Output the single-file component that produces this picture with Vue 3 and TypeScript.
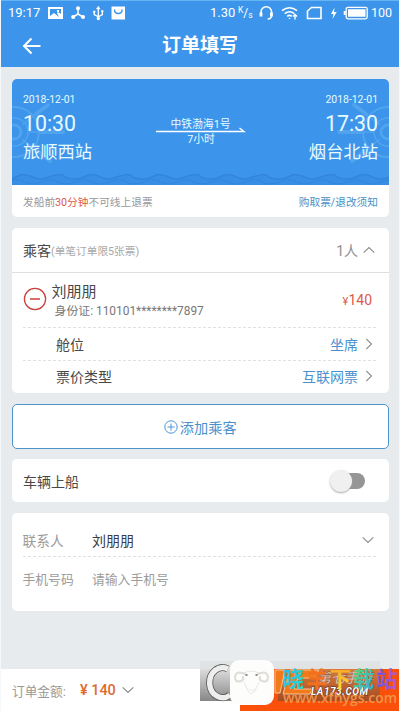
<script setup lang="ts">
interface Option { label: string; value: string }

const options: Option[] = [
  { label: '舱位', value: '坐席' },
  { label: '票价类型', value: '互联网票' },
]
</script>

<template>
  <div class="page">
    <header class="top">
      <div class="status">
        <span class="clock">19:17</span>
        <svg class="status-left" width="80" height="16" viewBox="0 0 80 16">
          <path fill="#fff" fill-rule="evenodd" d="M1 2h15v12H1zM3 4v7l4-3 5 4-2-4 1-1 3 2V4zM10 5h2v2h-2z" />
          <g stroke="#fff" stroke-width="1.5" fill="#fff">
            <path d="M31 4v5l-5 3M31 9l5 3" fill="none" />
            <circle cx="31" cy="3.2" r="1.3" /><circle cx="26.2" cy="12" r="1.3" /><circle cx="36" cy="12" r="1.3" />
          </g>
          <g stroke="#fff" stroke-width="1.3" fill="none">
            <path d="M51.300 3v11M47.200 7v2.500l4.100 2.300 4.100-2.300V6.500" />
            <path d="M49.500 4l1.800-2.800 1.800 2.800zM46.500 6h1.600v1.500h-1.600zM54.500 5.500h1.600V7h-1.600z" fill="#fff" stroke-width=".6" />
            <circle cx="51.300" cy="13.500" r="1" fill="#fff" />
          </g>
          <path fill="#fff" d="M64.500 1.500h13.500v13H64.500z" />
          <path d="M67.500 4.500q0 4 3.800 4t3.800-4" fill="none" stroke="#3c95ea" stroke-width="1.400" />
        </svg>
        <span class="speed">1.30</span>
        <span class="unit"><sup>K</sup>/<sub>s</sub></span>
        <svg class="status-right" width="110" height="16" viewBox="0 0 110 16">
          <g fill="none" stroke="#fff" stroke-width="1.600">
            <path d="M3 9V7a5.300 5.300 0 0 1 10.600 0v3q0 4-4 4" />
            <path d="M3 7.500v4M13.400 7.500v4" stroke-width="2.800" />
            <path d="M24 5.700q7.500-6 15 0M26.700 8.600q4.800-3.800 9.600 0M29.200 11.300q2.300-1.800 4.600 0" />
            <path d="M31.500 13v1M37 9v5.500M35 11.500l2-2 2 2" stroke-width="1.400" />
            <path d="M49.500 13.500V6l4-3.500H63v11z" />
            <rect x="88.200" y="2.300" width="21" height="11.500" rx="1.800" stroke-width="1.300" />
          </g>
          <path fill="#fff" d="M76.500 2.500L73 9h2.500l-1 5 4.200-7H76zM90 4.300h17.500v7.500H90zM85.700 6h2v4h-2z" />
        </svg>
        <span class="charge">100</span>
      </div>
      <div class="navbar">
        <svg class="back" width="20" height="18" viewBox="0 0 20 18"><path d="M9.500 1.500L2 9l7.500 7.500M2 9h16.500" fill="none" stroke="#fff" stroke-width="2" /></svg>
        <h1>订单填写</h1>
      </div>
    </header>

    <main>
      <section class="card trip">
        <div class="ticket">
          <svg class="decor" width="378" height="106" viewBox="0 0 378 106">
            <g id="wheel" fill="none" stroke="#64aff2" opacity=".55">
              <circle cx="2" cy="53" r="25" stroke-width="2" />
              <circle cx="2" cy="53" r="7" stroke-width="3" />
              <circle cx="2" cy="53" r="14" stroke-width="1.500" />
              <path d="M10 46L30 31M10 60L30 76M16 53h15" stroke-width="1.500" />
              <path d="M24 35L36 26M24 71L38 82M29 53h22" stroke-width="4" stroke-linecap="round" />
            </g>
            <use href="#wheel" transform="translate(378 0) scale(-1 1)" />
            <path d="M-6 100q7 0 12-3t12 0 10 3 12-3 12 0 10 3 12-3 12 0 10 3 12-3 12 0 10 3 12-3 12 0 10 3 12-3 12 0 10 3 12-3 12 0 10 3 12-3 12 0 10 3 12-3 12 0 10 3 12-3 12 0 10 3 12-3 12 0 10 3 12-3 12 0V110H-6z" fill="#388ee4" stroke="#3385da" stroke-width="1.500" />
            <path d="M-14 105q7 0 12-3t12 0 10 3 12-3 12 0 10 3 12-3 12 0 10 3 12-3 12 0 10 3 12-3 12 0 10 3 12-3 12 0 10 3 12-3 12 0 10 3 12-3 12 0 10 3 12-3 12 0 10 3 12-3 12 0 10 3 12-3 12 0 10 3 12-3 12 0" fill="none" stroke="#3385da" />
          </svg>
          <div class="end">
            <span class="date">2018-12-01</span><span class="time">10:30</span><span class="port">旅顺西站</span>
          </div>
          <div class="route">
            <span>中铁渤海1号</span>
            <svg width="90" height="6" viewBox="0 0 90 6"><path d="M0 4.500h88L83.500 1" fill="none" stroke="#fff" stroke-width="1.400" /></svg>
            <span class="duration">7小时</span>
          </div>
          <div class="end right">
            <span class="date">2018-12-01</span><span class="time">17:30</span><span class="port">烟台北站</span>
          </div>
        </div>
        <div class="notice">
          <span>发船前<b>30分钟</b>不可线上退票</span>
          <a>购取票/退改须知</a>
        </div>
      </section>

      <section class="card people">
        <div class="people-head">
          <span class="title">乘客</span><span class="limit">(单笔订单限5张票)</span>
          <span class="count">1人</span>
          <svg width="12" height="8" viewBox="0 0 12 8"><path d="M.7 6.700L6 1.500l5.300 5.200" fill="none" stroke="#8c8c8c" stroke-width="1.100" /></svg>
        </div>
        <div class="person">
          <svg width="24" height="24" viewBox="0 0 24 24"><circle cx="12" cy="12" r="10.600" fill="none" stroke="#c8413f" stroke-width="1.300" /><path d="M7 12h10" stroke="#c8413f" stroke-width="1.400" /></svg>
          <div class="identity">
            <span class="name">刘朋朋</span>
            <span class="id">身份证: 110101********7897</span>
          </div>
          <span class="price"><small>¥</small>140</span>
        </div>
        <div v-for="o in options" :key="o.label" class="option">
          <span>{{ o.label }}</span>
          <span class="value">{{ o.value }}</span>
          <svg width="8" height="12" viewBox="0 0 8 12"><path d="M1.300.8L6.500 6l-5.200 5.200" fill="none" stroke="#888" stroke-width="1.100" /></svg>
        </div>
      </section>

      <button class="add">
        <svg width="14" height="14" viewBox="0 0 14 14"><path d="M7 3.500v7M3.500 7h7" stroke="#4a94d6" /><circle cx="7" cy="7" r="6.200" fill="none" stroke="#4a94d6" /></svg>
        <span>添加乘客</span>
      </button>

      <section class="card vehicle">
        <span>车辆上船</span>
        <span class="switch"><i></i></span>
      </section>

      <section class="card contact">
        <div class="field first">
          <span class="label wide">联系人</span><span class="contact-name">刘朋朋</span>
          <svg width="12" height="8" viewBox="0 0 12 8"><path d="M.7 1.300L6 6.500l5.300-5.200" fill="none" stroke="#8c8c8c" stroke-width="1.100" /></svg>
        </div>
        <div class="field">
          <span class="label">手机号码</span><span class="placeholder">请输入手机号</span>
        </div>
      </section>
    </main>

    <footer>
      <span class="sum">订单金额:</span>
      <span class="total">¥ 140</span>
      <svg width="12" height="8" viewBox="0 0 12 8"><path d="M.7 1.300L6 6.500l5.300-5.200" fill="none" stroke="#888" stroke-width="1.100" /></svg>
      <div class="submit"></div>
    </footer>

    <svg class="stamp" width="200" height="56" viewBox="0 0 200 56">
      <defs>
        <linearGradient id="grey" x2="0" y2="1"><stop stop-color="#ddd" /><stop offset="1" stop-color="#878787" /></linearGradient>
        <linearGradient id="rust" x2="0" y2="1"><stop stop-color="#d9793b" /><stop offset="1" stop-color="#a54c24" /></linearGradient>
        <linearGradient id="cyan" x2="1" y2="1"><stop stop-color="#20b5f0" /><stop offset="1" stop-color="#28dfc4" /></linearGradient>
        <linearGradient id="amber" x2="0" y2="1"><stop stop-color="#f59a22" /><stop offset="1" stop-color="#ffe23b" /></linearGradient>
        <linearGradient id="lime" x2="1" y2="1"><stop stop-color="#63dc58" /><stop offset="1" stop-color="#2baaf0" /></linearGradient>
        <linearGradient id="violet" x2="1" y2="0"><stop stop-color="#6256e0" /><stop offset="1" stop-color="#c557c4" /></linearGradient>
      </defs>
      <path d="M0 6h180v8H0z" fill="#e0e3e4" />
      <path d="M0 14h46v32H0z" fill="url(#grey)" />
      <path d="M78 14h102v32H78z" fill="url(#rust)" />
      <path d="M31 14A13 15 0 1 0 33 40" transform="translate(-3 0)" fill="none" stroke="#555" stroke-width="7" />
      <path d="M31 14A13 15 0 1 0 33 40" transform="translate(-3 0)" fill="none" stroke="#eee" stroke-width="5.400" />
      <path d="M75 15h10l-5 23h-5zM90 15h29l-5 8H98l-4 11h18l-2 5H83z" fill="#f3791b" stroke="#f7c79c" />
      <text x="117" y="28" textLength="55" class="under-title">第七手游</text>
      <text x="111" y="40" textLength="57" class="under-url">LA173.COM</text>
      <rect x="30" y="5" width="44" height="45" rx="9" fill="#fdfdfc" />
      <g fill="none" stroke="#e0ded9" stroke-linecap="round">
        <path d="M45 19q-9-4-10 3 0 6 6 4 3-1 2-4M58 19q9-4 10 3 0 6-6 4-3-1-2-4" stroke-width="2.200" />
        <path d="M44 18q7-4 15 0M44 27l4 9 3 3 4-3 4-9M49 34l3 2 3-2" stroke-width=".7" />
      </g>
      <path d="M45.500 20h2M55.500 20h2" stroke="#666" stroke-width="1.500" />
      <g class="brand">
        <text x="82.500" y="32" fill="url(#cyan)">晓</text><text x="106" y="32" fill="#f4701d">羊</text><text x="129.500" y="32" fill="url(#amber)">下</text><text x="152.500" y="32" fill="url(#lime)">载</text><text x="176" y="32" fill="url(#violet)">站</text>
      </g>
      <text x="83" y="48" textLength="114" class="domain">www.xfhygs.com</text>
    </svg>
  </div>
</template>

<style>
body { margin: 0; overflow: hidden; }
</style>

<style scoped>
* { box-sizing: border-box; }
.page { position: relative; width: 400px; height: 711px; display: flex; flex-direction: column; background: #e7ebed; color: #484848; font-family: Roboto, "Noto Sans CJK SC", sans-serif; font-size: 14px; overflow: hidden; border: solid #f4f8fa; border-width: 0 1px; }
svg { display: block; flex: none; }
.top { height: 67px; background: #3c95ea; color: #fff; margin: 0 -1px; border-top: 1px solid #65b5f5; }
.status { height: 24px; display: flex; align-items: center; padding: 0 0 0 8px; font-size: 13px; line-height: 24px; white-space: nowrap; }
.clock { width: 39px; }
.speed { margin-left: 83px; width: 28px; }
.unit { width: 21px; font-size: 12px; line-height: 14px; }
.unit sup, .unit sub { font-size: 8.500px; line-height: 0; }
.unit sup { vertical-align: 4px; }
.unit sub { vertical-align: -1px; }
.status-right { margin-left: -1px; }
.charge { margin-left: 3px; font-size: 12.500px; }
.navbar { height: 42px; display: grid; grid-template-columns: 50px 1fr 50px; align-items: center; }
.back { margin-left: 22px; }
h1 { margin: 0; font-size: 19px; line-height: 40px; font-weight: 700; text-align: center; }
main { flex: 1; padding: 12px 10px 0 10.500px; display: flex; flex-direction: column; gap: 11px; }
.card { background: #fff; border-radius: 5px; overflow: hidden; }
.trip { height: 138px; }
.ticket { position: relative; height: 106px; display: flex; justify-content: space-between; background: #3c95ea; color: #e7fbff; padding: 14px 11px 0 11.500px; }
.decor { position: absolute; left: 0; top: 0; }
.end { position: relative; display: flex; flex-direction: column; width: 85px; }
.right { align-items: flex-end; }
.date { font-size: 10.400px; line-height: 14px; }
.time { font-size: 21.300px; line-height: 32px; margin-top: .5px; }
.port { font-size: 17.300px; line-height: 25px; }
.route { position: relative; display: flex; flex-direction: column; align-items: center; padding-top: 24px; font-size: 10.800px; line-height: 15px; }
.route svg { margin-top: -5px; }
.duration { line-height: 14px; margin-right: -1px; }
.notice { height: 32px; display: flex; justify-content: space-between; align-items: center; padding: 0 11px 0 11.500px; font-size: 10.700px; color: #999; }
.notice b { color: #e0574b; font-weight: 400; }
.notice a { color: #4b90c6; }
.people { height: 165px; flex: none; }
.people-head { height: 45px; display: flex; align-items: center; padding: 0 14px 0 11.500px; border-bottom: 1px solid #dfdfdf; }
.limit { font-size: 10.700px; color: #a8a8a8; }
.count { margin-left: auto; margin-right: 5px; color: #909090; }
.person { height: 54px; display: flex; padding: 7px 0 0; margin: 0 13px 0 11px; }
.person > svg { margin-top: 7px; }
.identity { display: flex; flex-direction: column; margin-left: 5px; }
.name { font-size: 15px; line-height: 25px; }
.id { font-size: 11.900px; line-height: 12px; margin-left: 3px; color: #777; white-space: nowrap; }
.price { margin: 8px 4px 0 auto; line-height: 24px; color: #dc584e; }
.price small { font-size: 11px; }
.option { height: 32.500px; display: flex; align-items: center; margin: 0 13px 0 11px; padding: 0 3.500px 0 33.500px; border-top: 1px dashed #e0e0e0; }
.value { color: #4b90cf; margin-left: auto; margin-right: 6.500px; }
.add { height: 45px; flex: none; display: flex; justify-content: center; align-items: center; gap: 2px; border: 1.500px solid #4d94ca; border-radius: 5px; background: #fff; color: #4a90cb; font: 14.200px Roboto, "Noto Sans CJK SC", sans-serif; padding: 0; margin-bottom: -1px; }
.vehicle { height: 43px; display: flex; align-items: center; justify-content: space-between; padding: 0 24px 0 11.500px; }
.switch { display: flex; align-items: center; justify-content: flex-start; width: 31px; height: 16px; border-radius: 8px; background: #959595; }
.switch i { width: 22px; height: 22px; flex: none; margin-left: -4px; border-radius: 50%; background: #f0f0f0; box-shadow: 0 1px 2px #aaa; }
.contact { height: 98px; padding: 11px 13px 0 11px; }
.field { height: 43px; display: flex; align-items: center; font-size: 12.800px; color: #9c9c9c; }
.first { height: 33px; border-bottom: 1px dashed #e0e0e0; padding-right: 2px; }
.label { width: 69.500px; }
.wide { font-size: 13.700px; }
.contact-name { font-size: 14px; color: #3c3c3c; }
.first svg { margin-left: auto; }
footer { height: 42px; flex: none; display: flex; align-items: center; background: #fff; padding-left: 11px; }
.sum { width: 68px; font-size: 12.700px; color: #999; }
.total { width: 42px; font-size: 14.400px; font-weight: 500; color: #de692d; white-space: nowrap; }
.submit { width: 160px; height: 42px; margin-left: auto; margin-right: -1px; background: #fb500a; }
.stamp { position: absolute; left: 199px; top: 655px; }
.brand { font: 700 21.500px "Noto Sans CJK SC", sans-serif; }
.under-title { font: italic 700 14px "Noto Sans CJK SC", sans-serif; fill: #e0bda3; stroke: #71412c; stroke-width: .3px; }
.under-url { font: italic 700 10px Roboto, sans-serif; fill: #fff; stroke: #572e1c; stroke-width: 1px; paint-order: stroke; }
.domain { font: 600 14px "Open Sans", "Noto Sans", sans-serif; fill: #ef9348; }
</style>
